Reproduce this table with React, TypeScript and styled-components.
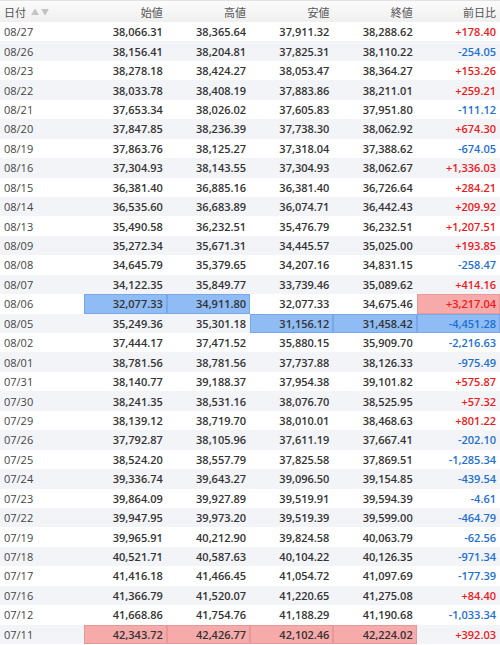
import React from 'react';
import styled, { createGlobalStyle } from 'styled-components';

const GlobalStyle = createGlobalStyle`
  html, body {
    margin: 0;
    padding: 0;
    background: #fff;
  }
  body {
    font-family: "Open Sans", "Noto Sans CJK JP", sans-serif;
  }
`;

type Mark = 'up' | 'down' | undefined;

interface Row {
  date: string;
  values: [string, string, string, string];
  change: string;
  marks?: [Mark, Mark, Mark, Mark, Mark];
}

const B: Mark = 'down';
const R: Mark = 'up';

const rows: Row[] = [
  { date: '08/27', values: ['38,066.31', '38,365.64', '37,911.32', '38,288.62'], change: '+178.40' },
  { date: '08/26', values: ['38,156.41', '38,204.81', '37,825.31', '38,110.22'], change: '-254.05' },
  { date: '08/23', values: ['38,278.18', '38,424.27', '38,053.47', '38,364.27'], change: '+153.26' },
  { date: '08/22', values: ['38,033.78', '38,408.19', '37,883.86', '38,211.01'], change: '+259.21' },
  { date: '08/21', values: ['37,653.34', '38,026.02', '37,605.83', '37,951.80'], change: '-111.12' },
  { date: '08/20', values: ['37,847.85', '38,236.39', '37,738.30', '38,062.92'], change: '+674.30' },
  { date: '08/19', values: ['37,863.76', '38,125.27', '37,318.04', '37,388.62'], change: '-674.05' },
  { date: '08/16', values: ['37,304.93', '38,143.55', '37,304.93', '38,062.67'], change: '+1,336.03' },
  { date: '08/15', values: ['36,381.40', '36,885.16', '36,381.40', '36,726.64'], change: '+284.21' },
  { date: '08/14', values: ['36,535.60', '36,683.89', '36,074.71', '36,442.43'], change: '+209.92' },
  { date: '08/13', values: ['35,490.58', '36,232.51', '35,476.79', '36,232.51'], change: '+1,207.51' },
  { date: '08/09', values: ['35,272.34', '35,671.31', '34,445.57', '35,025.00'], change: '+193.85' },
  { date: '08/08', values: ['34,645.79', '35,379.65', '34,207.16', '34,831.15'], change: '-258.47' },
  { date: '08/07', values: ['34,122.35', '35,849.77', '33,739.46', '35,089.62'], change: '+414.16' },
  { date: '08/06', values: ['32,077.33', '34,911.80', '32,077.33', '34,675.46'], change: '+3,217.04', marks: [B, B, undefined, undefined, R] },
  { date: '08/05', values: ['35,249.36', '35,301.18', '31,156.12', '31,458.42'], change: '-4,451.28', marks: [undefined, undefined, B, B, B] },
  { date: '08/02', values: ['37,444.17', '37,471.52', '35,880.15', '35,909.70'], change: '-2,216.63' },
  { date: '08/01', values: ['38,781.56', '38,781.56', '37,737.88', '38,126.33'], change: '-975.49' },
  { date: '07/31', values: ['38,140.77', '39,188.37', '37,954.38', '39,101.82'], change: '+575.87' },
  { date: '07/30', values: ['38,241.35', '38,531.16', '38,076.70', '38,525.95'], change: '+57.32' },
  { date: '07/29', values: ['38,139.12', '38,719.70', '38,010.01', '38,468.63'], change: '+801.22' },
  { date: '07/26', values: ['37,792.87', '38,105.96', '37,611.19', '37,667.41'], change: '-202.10' },
  { date: '07/25', values: ['38,524.20', '38,557.79', '37,825.58', '37,869.51'], change: '-1,285.34' },
  { date: '07/24', values: ['39,336.74', '39,643.27', '39,096.50', '39,154.85'], change: '-439.54' },
  { date: '07/23', values: ['39,864.09', '39,927.89', '39,519.91', '39,594.39'], change: '-4.61' },
  { date: '07/22', values: ['39,947.95', '39,973.20', '39,519.39', '39,599.00'], change: '-464.79' },
  { date: '07/19', values: ['39,965.91', '40,212.90', '39,824.58', '40,063.79'], change: '-62.56' },
  { date: '07/18', values: ['40,521.71', '40,587.63', '40,104.22', '40,126.35'], change: '-971.34' },
  { date: '07/17', values: ['41,416.18', '41,466.45', '41,054.72', '41,097.69'], change: '-177.39' },
  { date: '07/16', values: ['41,366.79', '41,520.07', '41,220.65', '41,275.08'], change: '+84.40' },
  { date: '07/12', values: ['41,668.86', '41,754.76', '41,188.29', '41,190.68'], change: '-1,033.34' },
  { date: '07/11', values: ['42,343.72', '42,426.77', '42,102.46', '42,224.02'], change: '+392.03', marks: [R, R, R, R, undefined] },
];

const columns = ['始値', '高値', '安値', '終値', '前日比'];

const Table = styled.div`
  width: 500px;
  font-size: 11px;
  border-top: 1px solid #e2e2e2;
`;

const HeaderRow = styled.div`
  display: grid;
  grid-template-columns: 83.5px repeat(5, 1fr);
  height: 21px;
  align-items: center;
  background: linear-gradient(#fbfbfb, #f0f0f0);
  color: #555;
`;

const HeaderCell = styled.div<{ $left?: boolean }>`
  display: flex;
  align-items: center;
  justify-content: ${p => (p.$left ? 'flex-start' : 'flex-end')};
  padding: 0 4px;
  gap: 5px;
`;

const SortIcons = styled.span`
  display: inline-flex;
  gap: 2px;
  color: #c3c3c3;
  font-size: 8px;
  line-height: 1;
`;

const BodyRow = styled.div<{ $odd: boolean }>`
  display: grid;
  grid-template-columns: 83.5px repeat(5, 1fr);
  height: 19.45px;
  align-items: stretch;
  background: ${p => (p.$odd ? '#f3f4f8' : '#fff')};
`;

const DateCell = styled.div`
  display: flex;
  align-items: center;
  padding: 0 4px;
  color: #444;
`;

const NumCell = styled.div<{ $mark?: Mark; $tone?: 'up' | 'down' }>`
  display: flex;
  align-items: center;
  justify-content: flex-end;
  padding: 0 4px;
  font-weight: 600;
  color: ${p => (p.$tone === 'up' ? '#f01818' : p.$tone === 'down' ? '#1d6fd3' : '#333')};
  background: ${p => (p.$mark === 'down' ? '#8fbcf4' : p.$mark === 'up' ? '#f7aaaa' : 'transparent')};
  box-shadow: ${p =>
    p.$mark === 'down'
      ? 'inset 0 0 0 1px #7aa8e6'
      : p.$mark === 'up'
      ? 'inset 0 0 0 1px #e79898'
      : 'none'};
`;

export default function App() {
  return (
    <>
      <GlobalStyle />
      <Table>
        <HeaderRow>
          <HeaderCell $left>
            日付
            <SortIcons>
              <span>▲</span>
              <span>▼</span>
            </SortIcons>
          </HeaderCell>
          {columns.map(c => (
            <HeaderCell key={c}>{c}</HeaderCell>
          ))}
        </HeaderRow>
        {rows.map((r, i) => (
          <BodyRow key={r.date} $odd={i % 2 === 1}>
            <DateCell>{r.date}</DateCell>
            {r.values.map((v, j) => (
              <NumCell key={j} $mark={r.marks?.[j]}>
                {v}
              </NumCell>
            ))}
            <NumCell $mark={r.marks?.[4]} $tone={r.change.startsWith('+') ? 'up' : 'down'}>
              {r.change}
            </NumCell>
          </BodyRow>
        ))}
      </Table>
    </>
  );
}
